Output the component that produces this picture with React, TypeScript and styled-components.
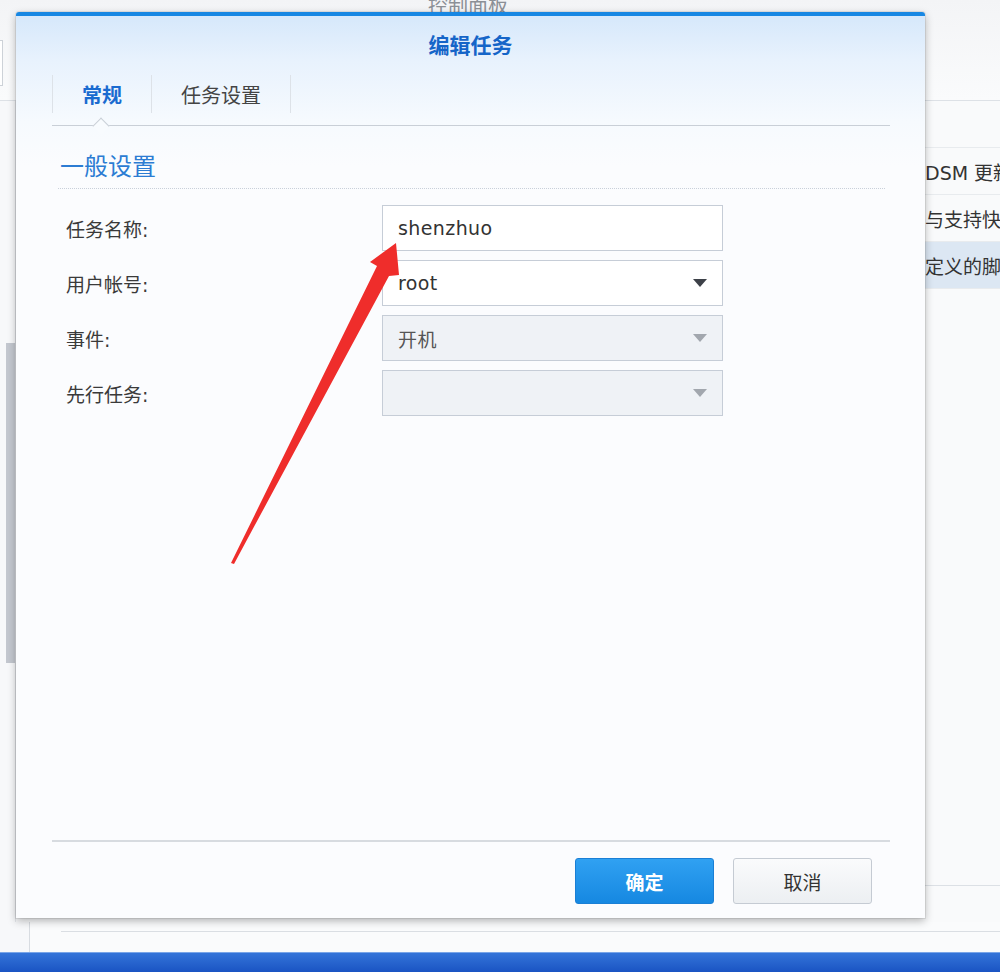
import React from 'react';
import styled, { createGlobalStyle } from 'styled-components';

const GlobalStyle = createGlobalStyle`
  html, body { margin: 0; padding: 0; }
  body {
    background: #f7f8fa;
    font-family: "DejaVu Sans", "Noto Sans CJK SC", sans-serif;
  }
  * { box-sizing: border-box; }
`;

const fields = [
  { label: '任务名称:', value: 'shenzhuo', select: false, disabled: false },
  { label: '用户帐号:', value: 'root', select: true, disabled: false },
  { label: '事件:', value: '开机', select: true, disabled: true },
  { label: '先行任务:', value: '', select: true, disabled: true },
];

const listRows = [
  { text: '', active: false },
  { text: '置DSM 更新', active: false },
  { text: '户与支持快速', active: false },
  { text: '自定义的脚本', active: true },
];

const App: React.FC = () => {
  return (
    <>
      <GlobalStyle />
      <Screen>
        <TopBar>
          <SearchStub />
          <BgTitle>控制面板</BgTitle>
        </TopBar>
        <Body>
          <Rail>
            <Scrollbar />
          </Rail>
          <Main />
          <RightList>
            {listRows.map((r, i) => (
              <ListRow key={i} $active={r.active}>{r.text}</ListRow>
            ))}
            <ListFoot />
          </RightList>
        </Body>
        <BottomStrip>
          <BottomLine />
        </BottomStrip>
        <Taskbar />

        <Dialog>
          <DialogTitle>编辑任务</DialogTitle>
          <TabBar>
            <Tab $active>常规</Tab>
            <Tab>任务设置</Tab>
          </TabBar>
          <Content>
            <SectionTitle>一般设置</SectionTitle>
            <FormGrid>
              {fields.map((f) => (
                <React.Fragment key={f.label}>
                  <Label>{f.label}</Label>
                  <Field $disabled={f.disabled}>
                    <span>{f.value}</span>
                    {f.select && <Caret $muted={f.disabled} />}
                  </Field>
                </React.Fragment>
              ))}
            </FormGrid>
          </Content>
          <Footer>
            <Button $primary>确定</Button>
            <Button>取消</Button>
          </Footer>
        </Dialog>

        <Arrow viewBox="0 0 1000 972">
          <polygon
            points="396,243 399,275 389,276 234,564 231,563 377,266 370,262"
            fill="#ef2d2b"
          />
        </Arrow>
      </Screen>
    </>
  );
};

export default App;

const Screen = styled.div`
  position: relative;
  width: 1000px;
  height: 972px;
  overflow: hidden;
  display: flex;
  flex-direction: column;
  background: #f7f8fa;
`;

const TopBar = styled.div`
  flex: none;
  height: 101px;
  display: flex;
  align-items: flex-start;
  border-bottom: 1px solid #dde1e6;
  background: linear-gradient(#f3f4f6, #fafbfc);
`;

const SearchStub = styled.div`
  flex: none;
  margin: 40px 0 0 -60px;
  width: 63px;
  height: 46px;
  border: 1px solid #cdd2d8;
  background: #fff;
`;

const BgTitle = styled.div`
  margin: -10px 0 0 425px;
  font-size: 20px;
  color: #8c9096;
`;

const Body = styled.div`
  flex: 1;
  display: flex;
  min-height: 0;
`;

const Rail = styled.div`
  flex: none;
  width: 16px;
  padding: 242px 0 0 6px;
  border-right: 1px solid #e2e5e9;
`;

const Scrollbar = styled.div`
  width: 9px;
  height: 320px;
  background: #c3c7cf;
`;

const Main = styled.div`
  flex: 1;
`;

const RightList = styled.div`
  flex: none;
  width: 94px;
  display: flex;
  flex-direction: column;
  background: #f9fafb;
  overflow: hidden;
`;

const ListRow = styled.div<{ $active?: boolean }>`
  height: 47px;
  flex: none;
  display: flex;
  align-items: center;
  white-space: nowrap;
  font-size: 19px;
  color: #333;
  border-bottom: 1px solid #e8ebee;
  background: ${(p) => (p.$active ? '#dce7f3' : 'transparent')};
`;

const ListFoot = styled.div`
  margin-top: auto;
  height: 37px;
  border-top: 1px solid #dce0e5;
`;

const BottomStrip = styled.div`
  flex: none;
  height: 30px;
  margin-left: 29px;
  padding: 9px 0 0 31px;
  border-left: 1px solid #d8dce1;
  background: #fafbfc;
`;

const BottomLine = styled.div`
  border-top: 1px solid #dadee3;
`;

const Taskbar = styled.div`
  flex: none;
  height: 20px;
  border-top: 1px solid #79a5e8;
  background: linear-gradient(#3474d9, #1a54c3);
`;

const Dialog = styled.div`
  position: absolute;
  left: 16px;
  top: 12px;
  width: 909px;
  height: 906px;
  display: flex;
  flex-direction: column;
  border-top: 4px solid #1787e3;
  border-radius: 3px 3px 0 0;
  background: linear-gradient(
    180deg,
    #d6e8fb 0px,
    #e8f2fd 45px,
    #f6fafe 105px,
    #fbfcfe 150px,
    #fbfcfe 100%
  );
  box-shadow: 0 3px 8px rgba(0, 0, 0, 0.28), 0 0 0 1px rgba(0, 0, 0, 0.07);
`;

const DialogTitle = styled.div`
  flex: none;
  height: 56px;
  display: flex;
  align-items: center;
  justify-content: center;
  font-family: "Noto Sans CJK SC", sans-serif;
  font-size: 21px;
  font-weight: 700;
  color: #1565c8;
`;

const TabBar = styled.div`
  flex: none;
  height: 51px;
  margin: 3px 35px 0 36px;
  display: flex;
  align-items: flex-start;
  border-bottom: 1px solid #c9cfd7;
`;

const Tab = styled.div<{ $active?: boolean }>`
  position: relative;
  height: 38px;
  padding: 0 29px;
  display: flex;
  align-items: center;
  font-family: "Noto Sans CJK SC", sans-serif;
  font-size: 20px;
  font-weight: ${(p) => (p.$active ? 700 : 400)};
  color: ${(p) => (p.$active ? '#1a6bd0' : '#444')};
  border-right: 1px solid #dde2e8;

  &:first-child {
    border-left: 1px solid #dde2e8;
  }

  ${(p) =>
    p.$active &&
    `
    &::after {
      content: '';
      position: absolute;
      left: 42px;
      top: 45px;
      width: 11px;
      height: 11px;
      background: #f8fbfe;
      border-top: 1px solid #c9cfd7;
      border-left: 1px solid #c9cfd7;
      transform: rotate(45deg);
    }
  `}
`;

const Content = styled.div`
  flex: 1;
  padding: 0 40px 0 42px;
`;

const SectionTitle = styled.div`
  margin-top: 24px;
  height: 39px;
  line-height: 30px;
  padding: 0 0 9px 2px;
  border-bottom: 1px dotted #c9d0da;
  font-family: "Noto Sans CJK SC", sans-serif;
  font-size: 24px;
  color: #2c7cd3;
`;

const FormGrid = styled.div`
  margin-top: 16px;
  display: grid;
  grid-template-columns: 324px 341px;
  grid-auto-rows: 46px;
  row-gap: 9px;
`;

const Label = styled.div`
  padding-left: 8px;
  display: flex;
  align-items: center;
  font-size: 19px;
  color: #3a3a3a;
`;

const Field = styled.div<{ $disabled?: boolean }>`
  display: flex;
  align-items: center;
  justify-content: space-between;
  padding: 0 15px 0 15px;
  border: 1px solid #c6cdd7;
  background: ${(p) => (p.$disabled ? '#eff2f6' : '#fff')};
  font-size: 19px;
  letter-spacing: 0.4px;
  color: ${(p) => (p.$disabled ? '#555' : '#333')};
`;

const Caret = styled.span<{ $muted?: boolean }>`
  width: 0;
  height: 0;
  border-left: 7px solid transparent;
  border-right: 7px solid transparent;
  border-top: 8px solid ${(p) => (p.$muted ? '#a2a7ae' : '#3d4148')};
`;

const Footer = styled.div`
  flex: none;
  margin: 0 35px 0 36px;
  padding: 16px 18px 14px 0;
  border-top: 2px solid #d7dbe0;
  display: flex;
  justify-content: flex-end;
  gap: 19px;
`;

const Button = styled.button<{ $primary?: boolean }>`
  width: 139px;
  height: 46px;
  border-radius: 3px;
  font-family: "Noto Sans CJK SC", sans-serif;
  font-size: 19px;
  cursor: pointer;
  border: 1px solid ${(p) => (p.$primary ? '#1a7fd5' : '#c5cbd3')};
  background: ${(p) =>
    p.$primary
      ? 'linear-gradient(#30a1f2, #1688e1)'
      : 'linear-gradient(#fafbfc, #eceff2)'};
  color: ${(p) => (p.$primary ? '#fff' : '#333')};
  font-weight: ${(p) => (p.$primary ? 700 : 400)};
`;

const Arrow = styled.svg`
  position: absolute;
  left: 0;
  top: 0;
  width: 1000px;
  height: 972px;
  pointer-events: none;
`;
